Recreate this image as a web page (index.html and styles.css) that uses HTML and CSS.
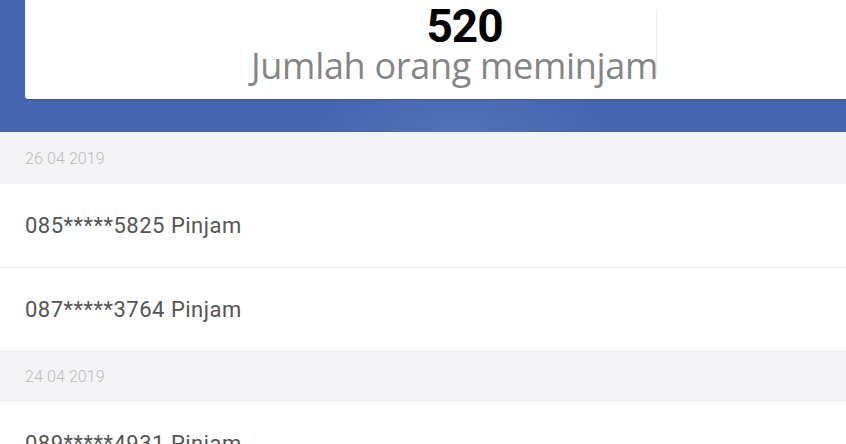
FILE: index.html
```html
<!DOCTYPE html>
<html>
<head>
<meta charset="utf-8">
<link rel="stylesheet" href="styles.css">
</head>
<body>
<div class="header">
  <div class="card">
    <div class="stat">
      <div class="count">520</div>
      <div class="label">Jumlah orang meminjam</div>
    </div>
  </div>
</div>
<div class="list">
  <div class="date">26 04 2019</div>
  <div class="row">085*****5825 Pinjam</div>
  <div class="row last">087*****3764 Pinjam</div>
  <div class="date">24 04 2019</div>
  <div class="row">089*****4931 Pinjam</div>
</div>
</body>
</html>
```
FILE: styles.css
```css
html, body {
  margin: 0;
  padding: 0;
  background: #ffffff;
  overflow: hidden;
}
body {
  width: 846px;
  height: 444px;
  font-family: Roboto, "Liberation Sans", sans-serif;
}
.header {
  height: 132px;
  background:
    radial-gradient(ellipse 150px 50px at 460px 128px, rgba(110, 140, 200, 0.3), rgba(110, 140, 200, 0) 100%),
    #4466b1;
  padding-left: 25px;
  box-sizing: border-box;
}
.card {
  height: 99px;
  background: #ffffff;
  border-bottom-left-radius: 3px;
  box-shadow: 0 1px 1px rgba(0, 0, 0, 0.15);
  padding-left: 228px;
  box-sizing: border-box;
  display: flex;
}
.stat {
  position: relative;
  display: flex;
  flex-direction: column;
  align-items: center;
  width: 403px;
}
.stat::after {
  content: "";
  position: absolute;
  right: -1px;
  top: 10px;
  height: 66px;
  width: 1px;
  background: #ececec;
}
.count {
  font-family: Roboto, "Liberation Sans", sans-serif;
  font-weight: 700;
  font-size: 46px;
  line-height: 46px;
  color: #000000;
  padding-left: 20px;
  margin-top: 3px;
  letter-spacing: -1px;
}
.label {
  font-family: "Open Sans", "Liberation Sans", sans-serif;
  font-size: 36px;
  font-weight: 500;
  line-height: 40px;
  color: #858585;
  margin-top: -3px;
  letter-spacing: -0.3px;
  white-space: nowrap;
}
.date {
  height: 52px;
  background: #f3f3f5;
  color: #bdbdbd;
  font-size: 16px;
  font-weight: 300;
  padding-left: 25px;
  display: flex;
  align-items: center;
  letter-spacing: 0.1px;
}
.row {
  height: 83px;
  border-bottom: 1px solid #eeeeee;
  color: #555555;
  font-size: 22px;
  letter-spacing: 0.5px;
  padding-left: 25px;
  display: flex;
  align-items: center;
  box-sizing: content-box;
}
.row.last {
  border-bottom: none;
  height: 82px;
}
```
